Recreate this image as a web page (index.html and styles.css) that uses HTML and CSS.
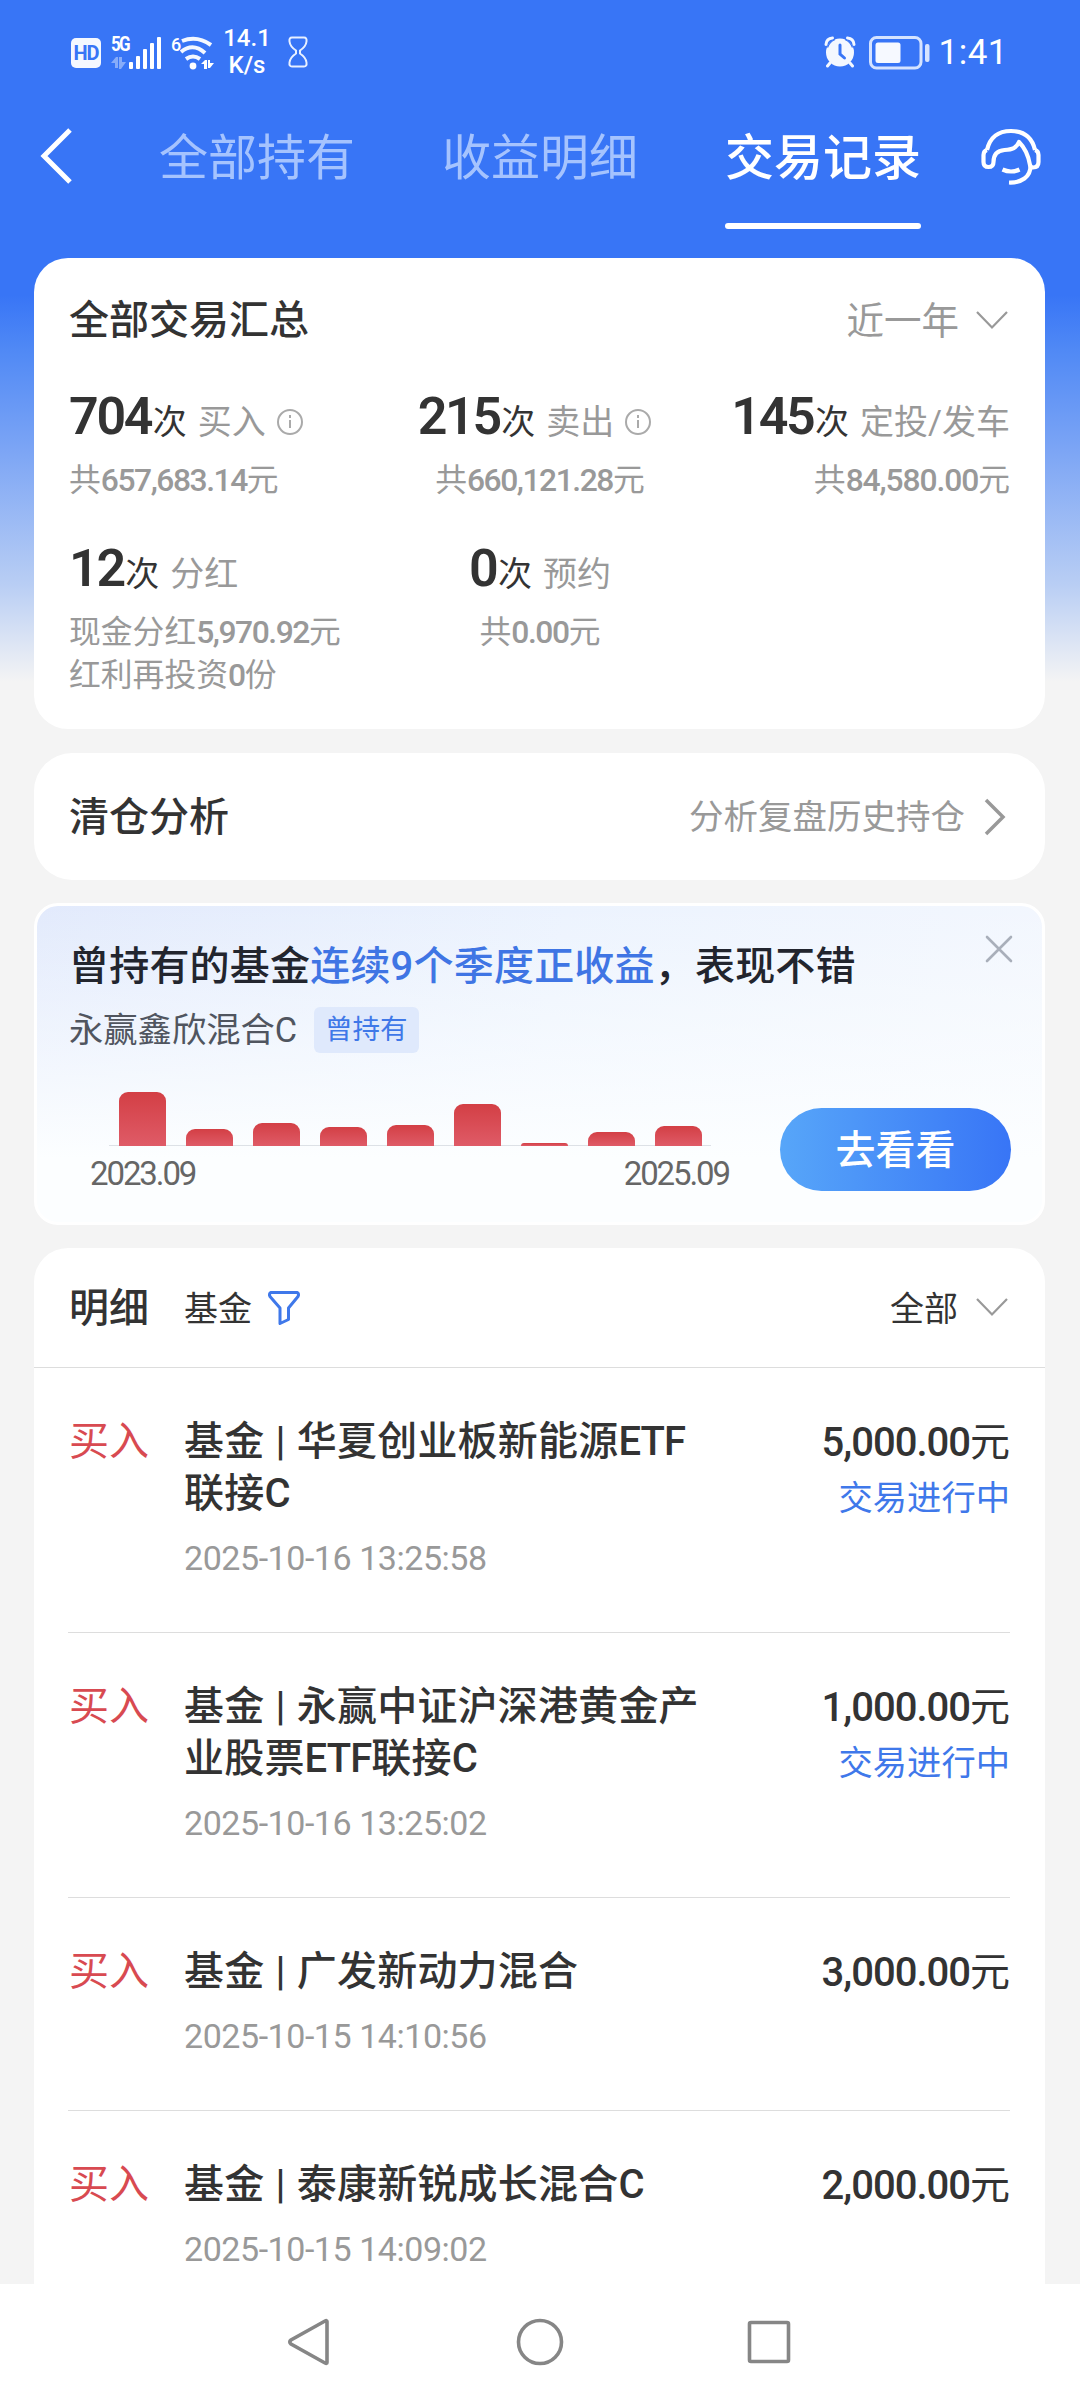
FILE: index.html
```html
<!DOCTYPE html>
<html lang="zh-CN">
<head>
<meta charset="utf-8">
<title>交易记录</title>
<link rel="stylesheet" href="styles.css">
</head>
<body>
<div class="screen">
  <div class="status">
    <div class="status-left">
      <span class="hd">HD</span>
      <div class="cell">
        <span class="cell-type">5G</span>
        <svg class="cell-bars" width="52" height="34" viewBox="0 0 52 34"><g fill="#fff"><rect x="18" y="26" width="4" height="7" rx="1"/><rect x="25" y="20" width="4" height="13" rx="1"/><rect x="32" y="13" width="4" height="20" rx="1"/><rect x="39" y="7" width="4" height="26" rx="1"/><rect x="46" y="1" width="4" height="32" rx="1"/></g><g fill="#fff" opacity=".4"><path d="M0 27l5-6h2v11H4v-5zM8 21h3v5h4l-5 7H8z"/></g></svg>
      </div>
      <div class="wifi">
        <span class="wifi-gen">6</span>
        <svg width="34" height="34" viewBox="0 0 34 34"><g fill="none" stroke="#f4f8ff" stroke-width="4"><path d="M2 5Q17-1 31 9"/><path d="M1 16Q13 6 25 17"/><path d="M6 23Q13 18 20 23"/></g><circle cx="13" cy="30" r="3.400" fill="#fff"/><path d="M21 28l4-4h2v9h-3v-5zM28 24h2v3h4l-4 5h-2z" fill="#fff"/></svg>
      </div>
      <div class="speed"><span>14.1</span><span>K/s</span></div>
      <svg class="hourglass" width="22" height="32" viewBox="0 0 22 32" fill="none" stroke="#e8f0ff" stroke-width="2"><path d="M5 1.500h12q3 0 2.500 4-.5 5-6.500 9v3q6 4 6.500 9 .5 4-2.500 4H5q-3 0-2.500-4Q3 21.500 9 17.500v-3Q3 10.500 2.500 5.500 2 1.500 5 1.500z"/></svg>
    </div>
    <div class="status-right">
      <svg width="32" height="32" viewBox="0 0 32 32"><circle cx="16" cy="16.500" r="14" fill="#f4f8ff"/><path d="M2 8.500Q2.500 2.500 8.500 2M30 8.500Q29.500 2.500 23.500 2M6 27l-2.500 3M26 27l2.500 3" fill="none" stroke="#f4f8ff" stroke-width="3" stroke-linecap="round"/><path d="M3.500 11.500Q5.500 6 11 3.500M28.500 11.500Q26.500 6 21 3.500" fill="none" stroke="#3875f6" stroke-width="1.300"/><path d="M16 9v9l4.500 4" fill="none" stroke="#3875f6" stroke-width="3" stroke-linecap="round"/></svg>
      <svg width="62" height="34" viewBox="0 0 62 34"><rect x="1.500" y="1.500" width="50.500" height="30.500" rx="6" fill="none" stroke="#d5e3ff" stroke-width="3"/><rect x="6.500" y="6.500" width="25" height="20.500" rx="2.500" fill="#f6f9ff"/><rect x="56" y="8" width="4.500" height="18" rx="2" fill="#d5e3ff"/></svg>
      <span class="clock">1:41</span>
    </div>
  </div>

  <div class="nav">
    <svg class="back" width="36" height="56" viewBox="0 0 36 56" fill="none" stroke="#fff" stroke-width="5"><path d="M31 2L5 28 31 54"/></svg>
    <div class="tabs">
      <span class="tab">全部持有</span>
      <span class="tab">收益明细</span>
      <span class="tab active">交易记录</span>
    </div>
    <svg class="service" width="60" height="58" viewBox="0 0 60 58" fill="none" stroke="#fff" stroke-width="4.200" stroke-linejoin="round"><path d="M6 22C9 9 18 3 30 3s21 6 24 19"/><path d="M6 22Q2.500 23 2.500 27v7q0 5 5 5t5-5c0-9 5-11.500 11-12 8-.5 12-2 14.500-8C44 20 47.500 28 49 37q.5 2.500 3 2.500 5.500 0 5.500-5.500v-7q0-4-3.500-5"/><path d="M49.500 38c0 11-9 17-21.500 16.500M21.500 41.500q8.500 4 17 0"/></svg>
  </div>

  <section class="card summary">
    <div class="head"><h2>全部交易汇总</h2><div class="period">近一年<svg class="down" width="32" height="20" viewBox="0 0 32 20"><path d="M1 1l15 15.500L31 1"/></svg></div></div>
    <div class="stats">
      <div class="stat">
        <p class="count"><b>704</b>次<i>买入</i><svg class="info" width="28" height="28" viewBox="0 0 28 28"><circle cx="14" cy="14" r="12"/><path d="M14 12v8M14 7v3"/></svg></p>
        <p class="sum">共<em>657,683.14</em>元</p>
      </div>
      <div class="stat mid">
        <p class="count sold"><b>215</b>次<i>卖出</i><svg class="info" width="28" height="28" viewBox="0 0 28 28"><circle cx="14" cy="14" r="12"/><path d="M14 12v8M14 7v3"/></svg></p>
        <p class="sum">共<em>660,121.28</em>元</p>
      </div>
      <div class="stat end">
        <p class="count"><b>145</b>次<i>定投/发车</i></p>
        <p class="sum">共<em>84,580.00</em>元</p>
      </div>
      <div class="stat">
        <p class="count"><b>12</b>次<i>分红</i></p>
        <p class="sum">现金分红<em>5,970.92</em>元<br>红利再投资<em>0</em>份</p>
      </div>
      <div class="stat mid">
        <p class="count"><b>0</b>次<i>预约</i></p>
        <p class="sum">共<em>0.00</em>元</p>
      </div>
    </div>
  </section>

  <section class="card analysis">
    <h2>清仓分析</h2>
    <div class="link">分析复盘历史持仓<svg width="24" height="38" viewBox="0 0 24 38"><path d="M3 2l17 17L3 36" fill="none" stroke="#999" stroke-width="3.500"/></svg></div>
  </section>

  <section class="card promo">
    <svg class="close" width="28" height="28" viewBox="0 0 28 28"><path d="M2 2l24 24M26 2L2 26" fill="none" stroke="#a9afba" stroke-width="2.600" stroke-linecap="round"/></svg>
    <h2>曾持有的基金<strong>连续9个季度正收益</strong>，表现不错</h2>
    <div class="fund">永赢鑫欣混合C<span class="tag">曾持有</span></div>
    <div class="promo-body">
      <div class="chart">
        <div class="bars">
          <span style="height:54px"></span><span style="height:17px"></span><span style="height:23px"></span><span style="height:19px"></span><span style="height:21px"></span><span style="height:42px"></span><span style="height:3px"></span><span style="height:14px"></span><span style="height:20px"></span>
        </div>
        <div class="axis"><span>2023.09</span><span>2025.09</span></div>
      </div>
      <div class="button">去看看</div>
    </div>
  </section>

  <section class="card details">
    <div class="filter">
      <h2>明细</h2><span class="kind">基金</span>
      <svg width="34" height="36" viewBox="0 0 34 36"><path d="M4 2.500h26q2.500 1 1 4L21.500 18v11.500L13 33.500V18L3 6.500q-1.500-3 1-4z" fill="none" stroke="#3f78ea" stroke-width="3" stroke-linejoin="round"/></svg>
      <span class="all">全部</span><svg class="down" width="32" height="20" viewBox="0 0 32 20"><path d="M1 1l15 15.500L31 1"/></svg>
    </div>
    <div class="row">
      <span class="side">买入</span>
      <div class="main"><p class="name">基金 | 华夏创业板新能源<span class="latin">ETF</span>联接C</p><p class="time">2025-10-16 13:25:58</p></div>
      <div class="amount"><p><b>5,000.00</b>元</p><p class="state">交易进行中</p></div>
    </div>
    <div class="row">
      <span class="side">买入</span>
      <div class="main"><p class="name">基金 | 永赢中证沪深港黄金产业股票<span class="latin">ETF</span>联接C</p><p class="time">2025-10-16 13:25:02</p></div>
      <div class="amount"><p><b>1,000.00</b>元</p><p class="state">交易进行中</p></div>
    </div>
    <div class="row">
      <span class="side">买入</span>
      <div class="main"><p class="name">基金 | 广发新动力混合</p><p class="time">2025-10-15 14:10:56</p></div>
      <div class="amount"><p><b>3,000.00</b>元</p></div>
    </div>
    <div class="row">
      <span class="side">买入</span>
      <div class="main"><p class="name">基金 | 泰康新锐成长混合C</p><p class="time">2025-10-15 14:09:02</p></div>
      <div class="amount"><p><b>2,000.00</b>元</p></div>
    </div>
  </section>

  <div class="system">
    <svg width="50" height="50" viewBox="0 0 50 50"><path d="M41 4.500v41q0 1.500-2 .500L5 27q-2.500-2 0-4L39 4q2-1 2 .500z"/></svg>
    <svg width="50" height="50" viewBox="0 0 50 50"><circle cx="25" cy="25" r="21.500"/></svg>
    <svg width="50" height="50" viewBox="0 0 50 50"><rect x="5.500" y="5.500" width="39" height="39" rx="1.500"/></svg>
  </div>
</div>
</body>
</html>
```
FILE: styles.css
```css
* { box-sizing: border-box; margin: 0; padding: 0; }
body {
  width: 1080px;
  height: 2400px;
  overflow: hidden;
  font-family: Roboto, "Noto Sans CJK SC", sans-serif;
  color: #333;
  background: #f4f4f4;
}
svg { display: block; flex: none; }
h2 { font-size: 40px; font-weight: 500; line-height: 52px; white-space: nowrap; }
.screen {
  display: flex;
  flex-direction: column;
  height: 2400px;
  background: linear-gradient(#3875f6 0, #3875f6 295px, #5089f5 350px, #7ca5f5 450px, #b9cef4 585px, #f4f4f4 682px);
}

/* status bar */
.status { display: flex; justify-content: space-between; height: 106px; padding: 0 72px 0 71px; color: #fff; }
.status-left, .status-right { display: flex; align-items: flex-start; }
.hd { width: 30px; height: 30px; margin-top: 38px; border-radius: 5px; background: #f4f8ff; color: #3875f6; font-size: 20px; font-weight: 700; line-height: 30px; text-align: center; letter-spacing: -1px; }
.cell { display: grid; margin: 36px 0 0 10px; }
.cell > * { grid-area: 1 / 1; }
.cell-type { font-size: 20px; font-weight: 700; line-height: 17px; letter-spacing: -2px; transform: scaleX(.85); transform-origin: left; }
.wifi { display: flex; margin: 36px 0 0 8px; }
.wifi-gen { width: 9px; font-size: 18px; font-weight: 500; line-height: 17px; letter-spacing: -1px; }
.speed { display: flex; flex-direction: column; width: 50px; margin: 25px 0 0 8px; font-size: 24px; font-weight: 500; line-height: 27px; text-align: center; }
.hourglass { margin: 36px 0 0 15px; }
.status-right svg:first-child { margin-top: 36px; }
.status-right svg:nth-child(2) { margin: 36px 0 0 13px; }
.clock { margin: 35px 0 0 8px; font-size: 35px; line-height: 36px; letter-spacing: .500px; }

/* header tabs */
.nav { display: flex; height: 152px; padding-left: 39px; }
.back { margin-top: 22px; }
.tabs { display: flex; gap: 87px; margin-left: 84px; }
.tab { width: 196px; height: 123px; padding-top: 23px; font-size: 49px; line-height: 60px; color: #a5c3fe; white-space: nowrap; }
.tab.active { color: #fff; font-weight: 500; }
.tab.active::after { content: ""; display: block; height: 6px; margin-top: 34px; border-radius: 3px; background: #fff; }
.service { margin: 22px 0 0 60px; }

/* cards */
.card { width: 1011px; margin-left: 34px; border-radius: 34px; background: #fff; flex: none; }
.summary { height: 471px; padding: 37px 35px 0 35px; }
.head { display: flex; justify-content: space-between; height: 52px; }
.period { display: flex; align-items: center; gap: 17px; padding-right: 2px; font-size: 37.500px; line-height: 52px; color: #999; }
.down path { fill: none; stroke: #999; stroke-width: 2.200; }
.stats { display: grid; grid-template-columns: 310px 1fr 310px; }
.stat { height: 152px; padding-top: 44px; }
.stat.mid { justify-self: center; text-align: center; padding-left: 1px; }
.stat.end { text-align: right; }
.count { display: flex; align-items: baseline; height: 68px; font-size: 34px; line-height: 52px; white-space: nowrap; }
.mid .count { justify-content: center; }
.count.sold { margin: 0 5px 0 -5px; }
.end .count { justify-content: flex-end; }
.count b { font-size: 52px; font-weight: 600; letter-spacing: -2.300px; margin-right: 1.500px; }
.count i { font-style: normal; color: #999; margin-left: 11px; }
.info { align-self: flex-start; margin: 17px 0 0 10px; fill: none; stroke: #aaa; stroke-width: 2; }
.sum { font-size: 31.800px; line-height: 43px; color: #999; white-space: nowrap; }
.sum em { font-style: normal; font-weight: 500; letter-spacing: -1.450px; }
.end .sum em { letter-spacing: -1.100px; }

.analysis { display: flex; justify-content: space-between; align-items: center; height: 127px; margin-top: 24px; padding: 2px 38px 0 35px; border-radius: 38px; }
.link { display: flex; align-items: center; gap: 18px; font-size: 34.500px; line-height: 50px; padding-bottom: 1px; color: #999; }

.promo { position: relative; height: 322px; margin-top: 23px; padding: 35px 31px 0 32px; border: 3px solid #fff; border-radius: 24px; background: linear-gradient(to bottom, rgba(255,255,255,0), #fcfeff 80%), linear-gradient(100deg, #e2eafc, #ecf3fe 50%, #f3f7fe); }
.promo h2 { color: #22252e; line-height: 52px; letter-spacing: .200px; }
.promo strong { font-weight: 500; color: #3f75e4; }
.close { position: absolute; top: 29px; right: 29px; }
.fund { display: flex; align-items: center; height: 46px; margin-top: 14px; font-size: 34.300px; line-height: 46px; color: #50555f; }
.tag { height: 46px; margin-left: 17px; padding: 0 11px; border-radius: 6px; background: #dfe9fc; color: #3f78e8; font-size: 27.500px; line-height: 46px; }
.promo-body { display: flex; justify-content: space-between; }
.chart { width: 664px; padding: 37px 0 0 21px; }
.bars { display: flex; align-items: flex-end; gap: 20px; width: 602px; height: 56px; margin-left: 19px; padding-left: 10px; border-bottom: 1px solid #dde1e6; }
.bars span { width: 47px; border-radius: 9px 9px 0 0; background: linear-gradient(#d33f45, #df5b67); margin-bottom: -1px; }
.axis { display: flex; justify-content: space-between; width: 639px; font-size: 33px; line-height: 40px; margin-top: 8px; color: #666; letter-spacing: -2.100px; }
.button { width: 231px; height: 83px; margin-top: 55px; border-radius: 42px; background: linear-gradient(to right, #57a6f9, #3875f6); color: #fff; font-size: 40px; font-weight: 500; line-height: 86px; text-align: center; }

.details { flex: 1 1 0; min-height: 0; overflow: hidden; margin-top: 23px; border-radius: 34px 34px 0 0; }
.filter { display: flex; align-items: center; height: 120px; padding: 0 37px 0 35px; border-bottom: 1px solid #ddd; font-size: 34px; }
.filter h2 { padding-top: 3px; line-height: 50px; }
.kind { margin: -2px 15px 0 35px; }
.all { margin: -2px 18px 0 auto; }
.row { display: flex; margin: 0 35px 0 34px; padding: 48px 0 56px 1px; border-bottom: 1px solid #ddd; }
.side { width: 115px; font-size: 40px; line-height: 52px; color: #d84a51; }
.main { width: 520px; }
.name { font-size: 40px; font-weight: 500; line-height: 52px; word-spacing: 1px; letter-spacing: .200px; }
.latin { letter-spacing: -.900px; }
.time { margin-top: 21px; font-size: 34px; line-height: 35px; letter-spacing: -.450px; color: #999; }
.amount { margin-left: auto; font-size: 40px; line-height: 54px; text-align: right; white-space: nowrap; }
.amount b { font-weight: 500; letter-spacing: -1px; }
.state { font-size: 34.300px; line-height: 56px; color: #3f78ea; }

/* system navigation */
.system { display: flex; flex: none; align-items: center; justify-content: center; gap: 179px; height: 116px; background: #fff; }
.system svg { fill: none; stroke: #868686; stroke-width: 3.600; }
```
